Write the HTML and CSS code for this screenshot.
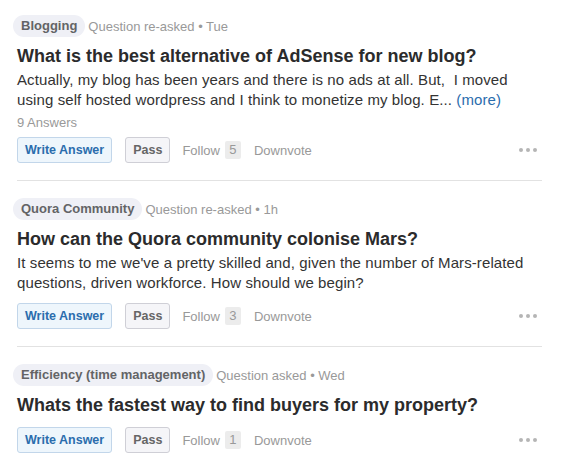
FILE: index.html
```html
<!DOCTYPE html>
<html>
<head>
<meta charset="utf-8">
<link rel="stylesheet" href="styles.css">
</head>
<body>
<div class="feed">
  <div class="item">
    <div class="meta">
      <span class="topic">Blogging</span>
      <span class="when">Question re-asked • Tue</span>
    </div>
    <div class="title">What is the best alternative of AdSense for new blog?</div>
    <div class="body">Actually, my blog has been years and there is no ads at all. But,&nbsp; I moved using self hosted wordpress and I think to monetize my blog. E... <span class="more">(more)</span></div>
    <div class="answers">9 Answers</div>
    <div class="actions">
      <span class="btn write">Write Answer</span>
      <span class="btn pass">Pass</span>
      <span class="follow">Follow <span class="count">5</span></span>
      <span class="down">Downvote</span>
      <span class="dots"><i></i><i></i><i></i></span>
    </div>
  </div>
  <div class="item">
    <div class="meta">
      <span class="topic">Quora Community</span>
      <span class="when">Question re-asked • 1h</span>
    </div>
    <div class="title">How can the Quora community colonise Mars?</div>
    <div class="body">It seems to me we've a pretty skilled and, given the number of Mars-related questions, driven workforce. How should we begin?</div>
    <div class="actions">
      <span class="btn write">Write Answer</span>
      <span class="btn pass">Pass</span>
      <span class="follow">Follow <span class="count">3</span></span>
      <span class="down">Downvote</span>
      <span class="dots"><i></i><i></i><i></i></span>
    </div>
  </div>
  <div class="item">
    <div class="meta">
      <span class="topic">Efficiency (time management)</span>
      <span class="when">Question asked • Wed</span>
    </div>
    <div class="title">Whats the fastest way to find buyers for my property?</div>
    <div class="actions">
      <span class="btn write">Write Answer</span>
      <span class="btn pass">Pass</span>
      <span class="follow">Follow <span class="count">1</span></span>
      <span class="down">Downvote</span>
      <span class="dots"><i></i><i></i><i></i></span>
    </div>
  </div>
</div>
</body>
</html>
```
FILE: styles.css
```css
html, body {
  margin: 0;
  padding: 0;
  background: #fff;
}
body {
  font-family: "Liberation Sans", Arial, sans-serif;
  color: #333;
}
.feed {
  width: 525px;
  padding-left: 17px;
}
.item {
  padding: 17px 0 17px;
  border-bottom: 1px solid #e2e2e2;
}
.item:first-child {
  padding-top: 15px;
}
.item:last-child {
  border-bottom: none;
}
.meta {
  display: flex;
  align-items: center;
  height: 22px;
  margin-left: -4px;
}
.topic {
  display: inline-block;
  height: 22px;
  line-height: 22px;
  padding: 0 8px;
  border-radius: 11px;
  background: #eff0f6;
  color: #636466;
  font-size: 13px;
  font-weight: bold;
}
.when {
  margin-left: 3px;
  font-size: 13px;
  color: #999;
}
.title {
  margin-top: 7px;
  font-size: 18px;
  line-height: 24px;
  font-weight: bold;
  color: #2b2b2c;
}
.body {
  margin-top: 2px;
  font-size: 15px;
  line-height: 20px;
  letter-spacing: 0.1px;
  color: #333;
}
.more {
  color: #2b6dad;
}
.answers {
  margin-top: 6px;
  font-size: 13px;
  line-height: 14px;
  color: #999;
}
.actions {
  display: flex;
  align-items: center;
  margin-top: 10px;
  height: 26px;
}
.answers + .actions {
  margin-top: 7px;
}
.btn {
  box-sizing: border-box;
  height: 26px;
  line-height: 24px;
  padding: 0 7px;
  border: 1px solid;
  border-radius: 3px;
  font-size: 12.5px;
  font-weight: bold;
}
.write {
  background: #eef6fc;
  border-color: #c2d6ea;
  color: #2b6dad;
}
.pass {
  margin-left: 13px;
  background: #f5f5f8;
  border-color: #cfcfd6;
  color: #666;
}
.follow {
  margin-left: 12px;
  font-size: 13px;
  color: #999;
  display: flex;
  align-items: center;
}
.count {
  display: inline-block;
  margin-left: 5px;
  width: 16px;
  height: 18px;
  line-height: 18px;
  text-align: center;
  background: #ececec;
  border-radius: 2px;
  color: #999;
}
.down {
  margin-left: 13px;
  font-size: 13px;
  color: #999;
}
.dots {
  margin-left: auto;
  margin-right: 5px;
  display: flex;
  gap: 3px;
}
.dots i {
  width: 4px;
  height: 4px;
  border-radius: 50%;
  background: #b5b5b5;
}
```
